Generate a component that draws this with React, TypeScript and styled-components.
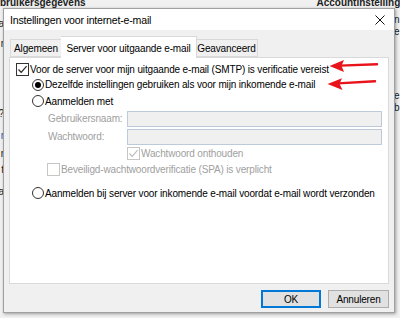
import React from "react";
import styled, { createGlobalStyle } from "styled-components";

const GlobalStyle = createGlobalStyle`
  html, body {
    margin: 0;
    padding: 0;
    background: #f0f0f0;
  }
  body {
    font-family: "Liberation Sans", Arial, sans-serif;
    -webkit-font-smoothing: antialiased;
  }
`;

const Desktop = styled.div`
  position: relative;
  width: 400px;
  height: 318px;
  overflow: hidden;
  background: #f0f0f0;
  color: #000;
`;

const BackHeader = styled.div`
  display: flex;
  justify-content: space-between;
  height: 8px;
  margin-top: -2px;
  font-size: 10px;
  font-weight: bold;
  line-height: 10px;
  color: #222;
  white-space: nowrap;
`;

const BackTitle = styled.span<{ $shift: number }>`
  margin-left: ${(p) => p.$shift}px;
  margin-right: ${(p) => -p.$shift}px;
`;

const BackBody = styled.div`
  display: flex;
  justify-content: space-between;
  font-size: 10px;
  line-height: 12px;
  color: #222;
`;

const BackColumn = styled.div<{ $side: "left" | "right" }>`
  display: flex;
  flex-direction: column;
  align-items: ${(p) => (p.$side === "left" ? "flex-end" : "flex-start")};
  width: 6px;
  overflow: hidden;
  margin-${(p) => p.$side}: ${(p) => (p.$side === "left" ? -2 : 0)}px;
`;

const BackLine = styled.span<{ $gap: number; $blue?: boolean }>`
  margin-top: ${(p) => p.$gap}px;
  color: ${(p) => (p.$blue ? "#1c5fb5" : "#222")};
  white-space: nowrap;
`;

const Dialog = styled.div`
  position: absolute;
  left: 3px;
  top: 8px;
  width: 392px;
  height: 305px;
  box-sizing: border-box;
  border: 1px solid #a0a0a0;
  background: #f0f0f0;
  box-shadow: 1px 1px 3px rgba(0, 0, 0, 0.35);
  display: flex;
  flex-direction: column;
  font-size: 10px;
  letter-spacing: -0.15px;
`;

const TitleBar = styled.div`
  height: 21px;
  flex: none;
  background: #fff;
  display: flex;
  align-items: center;
  justify-content: space-between;
  padding: 0 9px 0 6px;
  font-size: 10.6px;
  letter-spacing: -0.2px;
`;

const DialogBody = styled.div`
  flex: 1;
  display: flex;
  flex-direction: column;
  padding: 6px 5px 0 5px;
`;

const TabStrip = styled.div`
  display: flex;
  align-items: flex-end;
  height: 21px;
  padding-left: 1px;
  position: relative;
  z-index: 1;
`;

const Tab = styled.div<{ $active?: boolean; $w: number }>`
  box-sizing: border-box;
  width: ${(p) => p.$w}px;
  height: ${(p) => (p.$active ? 22 : 18)}px;
  padding-top: ${(p) => (p.$active ? 2 : 1)}px;
  margin: ${(p) => (p.$active ? "0 -1px -1px -1px" : "0")};
  border: 1px solid #d9d9d9;
  border-bottom: ${(p) => (p.$active ? "none" : "1px solid #d9d9d9")};
  background: ${(p) => (p.$active ? "#fff" : "#f0f0f0")};
  display: flex;
  align-items: center;
  justify-content: center;
  white-space: nowrap;
  position: relative;
  z-index: ${(p) => (p.$active ? 2 : 0)};
  & + & {
    border-left: ${(p) => (p.$active ? "1px solid #d9d9d9" : "none")};
  }
`;

const Panel = styled.div`
  height: 227px;
  width: 380px;
  box-sizing: border-box;
  border: 1px solid #d9d9d9;
  background: #fff;
  display: flex;
  flex-direction: column;
  padding: 3px 0 0 6px;
`;

const Row = styled.div<{ $h: number; $indent?: number; $top?: number }>`
  height: ${(p) => p.$h}px;
  margin-top: ${(p) => p.$top ?? 0}px;
  padding-left: ${(p) => p.$indent ?? 0}px;
  display: flex;
  align-items: center;
  white-space: nowrap;
`;

const Label = styled.span<{ $disabled?: boolean }>`
  color: ${(p) => (p.$disabled ? "#a0a0a0" : "#000")};
`;

const FieldLabel = styled(Label)`
  width: 79px;
  flex: none;
`;

const Input = styled.div`
  width: 255px;
  height: 16px;
  box-sizing: border-box;
  border: 1px solid #bccadb;
  background: #f0f0f0;
`;

const Box = styled.span<{ $disabled?: boolean }>`
  width: 13px;
  height: 13px;
  box-sizing: border-box;
  flex: none;
  border: 1px solid ${(p) => (p.$disabled ? "#c6c6c6" : "#333")};
  background: #fff;
  margin-right: 1px;
  display: flex;
  align-items: center;
  justify-content: center;
`;

const Radio = styled.span<{ $on?: boolean }>`
  width: 12px;
  height: 12px;
  box-sizing: border-box;
  flex: none;
  border-radius: 50%;
  border: 1px solid #333;
  background: #fff;
  margin-right: 1px;
  display: flex;
  align-items: center;
  justify-content: center;
  &::after {
    content: "";
    display: ${(p) => (p.$on ? "block" : "none")};
    width: 6px;
    height: 6px;
    border-radius: 50%;
    background: #000;
  }
`;

const Footer = styled.div`
  display: flex;
  justify-content: flex-end;
  gap: 7px;
  padding: 6px 0 0;
`;

const Button = styled.div<{ $default?: boolean }>`
  width: ${(p) => (p.$default ? 60 : 61)}px;
  height: 18px;
  box-sizing: border-box;
  border: 1px solid ${(p) => (p.$default ? "#0078d7" : "#adadad")};
  box-shadow: ${(p) => (p.$default ? "inset 0 0 0 1px #0078d7" : "none")};
  background: #e1e1e1;
  display: flex;
  align-items: center;
  justify-content: center;
`;

const Overlay = styled.svg`
  position: absolute;
  left: 0;
  top: 0;
  pointer-events: none;
`;

const Check = ({ color }: { color: string }) => (
  <svg width="11" height="11" viewBox="0 0 11 11">
    <path d="M1.5 5.5 L4.2 8.3 L9.6 2.2" fill="none" stroke={color} strokeWidth="1.2" />
  </svg>
);

const CloseIcon = () => (
  <svg width="10" height="10" viewBox="0 0 10 10">
    <path d="M0.5 0.5 L9.5 9.5 M9.5 0.5 L0.5 9.5" stroke="#111" strokeWidth="1" />
  </svg>
);

export default function App() {
  return (
    <>
      <GlobalStyle />
      <Desktop>
        <BackHeader>
          <BackTitle $shift={0}>bruikersgegevens</BackTitle>
          <BackTitle $shift={12}>Accountinstellingen</BackTitle>
        </BackHeader>
        <BackBody>
          <BackColumn $side="left">
            <BackLine $gap={12}>a</BackLine>
            <BackLine $gap={8}>r</BackLine>
            <BackLine $gap={58}>?</BackLine>
            <BackLine $gap={10} $blue>r</BackLine>
            <BackLine $gap={6}>r</BackLine>
            <BackLine $gap={4}>t</BackLine>
            <BackLine $gap={10}>a</BackLine>
          </BackColumn>
          <BackColumn $side="right">
            <BackLine $gap={8}>n</BackLine>
            <BackLine $gap={0}>e</BackLine>
            <BackLine $gap={52}>e</BackLine>
            <BackLine $gap={0}>b</BackLine>
          </BackColumn>
        </BackBody>

        <Dialog>
          <TitleBar>
            <span>Instellingen voor internet-e-mail</span>
            <CloseIcon />
          </TitleBar>
          <DialogBody>
            <TabStrip>
              <Tab $w={52}>Algemeen</Tab>
              <Tab $active $w={136}>Server voor uitgaande e-mail</Tab>
              <Tab $w={62}>Geavanceerd</Tab>
            </TabStrip>
            <Panel>
              <Row $h={16}>
                <Box>
                  <Check color="#222" />
                </Box>
                <Label>Voor de server voor mijn uitgaande e-mail (SMTP) is verificatie vereist</Label>
              </Row>
              <Row $h={15} $indent={16}>
                <Radio $on />
                <Label>Dezelfde instellingen gebruiken als voor mijn inkomende e-mail</Label>
              </Row>
              <Row $h={18} $indent={16}>
                <Radio />
                <Label>Aanmelden met</Label>
              </Row>
              <Row $h={17} $indent={32}>
                <FieldLabel $disabled>Gebruikersnaam:</FieldLabel>
                <Input />
              </Row>
              <Row $h={17} $indent={32} $top={1}>
                <FieldLabel $disabled>Wachtwoord:</FieldLabel>
                <Input />
              </Row>
              <Row $h={16} $indent={111}>
                <Box $disabled>
                  <Check color="#bdbdbd" />
                </Box>
                <Label $disabled>Wachtwoord onthouden</Label>
              </Row>
              <Row $h={16} $indent={31}>
                <Box $disabled />
                <Label $disabled>Beveiligd-wachtwoordverificatie (SPA) is verplicht</Label>
              </Row>
              <Row $h={16} $indent={16} $top={8}>
                <Radio />
                <Label>Aanmelden bij server voor inkomende e-mail voordat e-mail wordt verzonden</Label>
              </Row>
            </Panel>
            <Footer>
              <Button $default>OK</Button>
              <Button>Annuleren</Button>
            </Footer>
          </DialogBody>
        </Dialog>

        <Overlay width="400" height="318" viewBox="0 0 400 318">
          <path d="M377 64.3 L340 65.6" stroke="#e8141c" strokeWidth="2.4" strokeLinecap="round" />
          <polygon points="329.5,66 344,60 341.5,65.8 344,72" fill="#e8141c" />
          <path d="M375 81.2 L338 83.4" stroke="#e8141c" strokeWidth="2.4" strokeLinecap="round" />
          <polygon points="327.5,84 342,78.2 339.5,83.8 342.5,90" fill="#e8141c" />
        </Overlay>
      </Desktop>
    </>
  );
}
